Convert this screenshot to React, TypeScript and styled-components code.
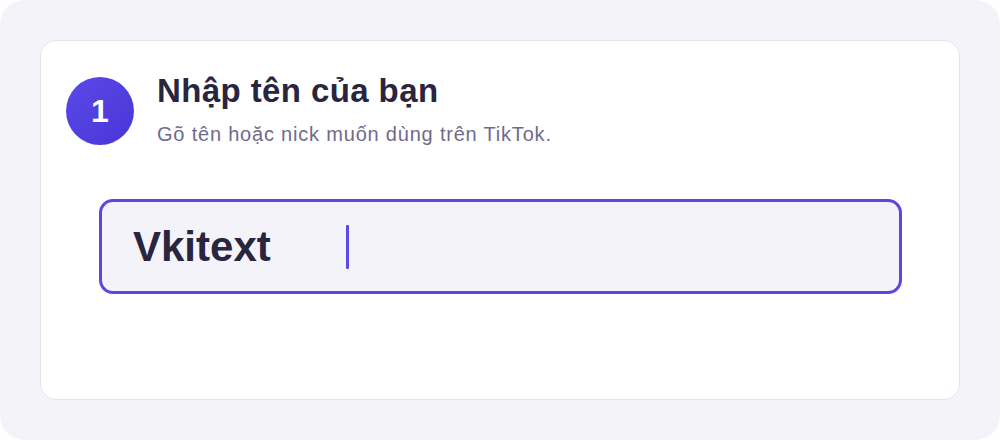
import React from "react";
import styled, { createGlobalStyle } from "styled-components";

const GlobalStyle = createGlobalStyle`
  html, body {
    margin: 0;
    padding: 0;
    background: #ffffff;
  }
  body {
    font-family: "Liberation Sans", Arial, sans-serif;
  }
`;

const Frame = styled.div`
  width: 1000px;
  height: 440px;
  box-sizing: border-box;
  padding: 40px;
  background: #f5f3fa;
  border-radius: 24px;
`;

const Card = styled.div`
  height: 100%;
  box-sizing: border-box;
  background: #ffffff;
  border: 1px solid #e6e3f0;
  border-radius: 16px;
  padding: 35px 25px;
  display: flex;
  flex-direction: column;
`;

const StepHeader = styled.div`
  display: flex;
  align-items: center;
  gap: 23px;
`;

const StepBadge = styled.div`
  width: 68px;
  height: 68px;
  flex-shrink: 0;
  border-radius: 50%;
  background: linear-gradient(135deg, #5a48e8 0%, #4a36d8 100%);
  color: #ffffff;
  font-size: 32px;
  font-weight: 700;
  display: flex;
  align-items: center;
  justify-content: center;
`;

const StepText = styled.div`
  display: flex;
  flex-direction: column;
  gap: 12px;
  margin-top: -4px;
`;

const Title = styled.h1`
  margin: 0;
  font-size: 33px;
  line-height: 38px;
  font-weight: 700;
  letter-spacing: 0.4px;
  color: #29253f;
`;

const Subtitle = styled.p`
  margin: 0;
  font-size: 20px;
  line-height: 24px;
  letter-spacing: 0.8px;
  color: #6f6b8c;
`;

const InputBox = styled.div`
  margin: 53px 0 0 33px;
  width: 803px;
  height: 95px;
  box-sizing: border-box;
  border: 3px solid #5a48e3;
  border-radius: 14px;
  background: #f4f3f9;
  display: flex;
  align-items: center;
  padding: 0 31px;
`;

const Value = styled.span`
  font-size: 42px;
  font-weight: 700;
  color: #29253f;
`;

const Caret = styled.span`
  width: 3px;
  height: 44px;
  margin-left: 75px;
  background: #5b4ae6;
  border-radius: 1px;
`;

export default function App() {
  return (
    <>
      <GlobalStyle />
      <Frame>
        <Card>
          <StepHeader>
            <StepBadge>1</StepBadge>
            <StepText>
              <Title>Nhập tên của bạn</Title>
              <Subtitle>Gõ tên hoặc nick muốn dùng trên TikTok.</Subtitle>
            </StepText>
          </StepHeader>
          <InputBox>
            <Value>Vkitext</Value>
            <Caret />
          </InputBox>
        </Card>
      </Frame>
    </>
  );
}
